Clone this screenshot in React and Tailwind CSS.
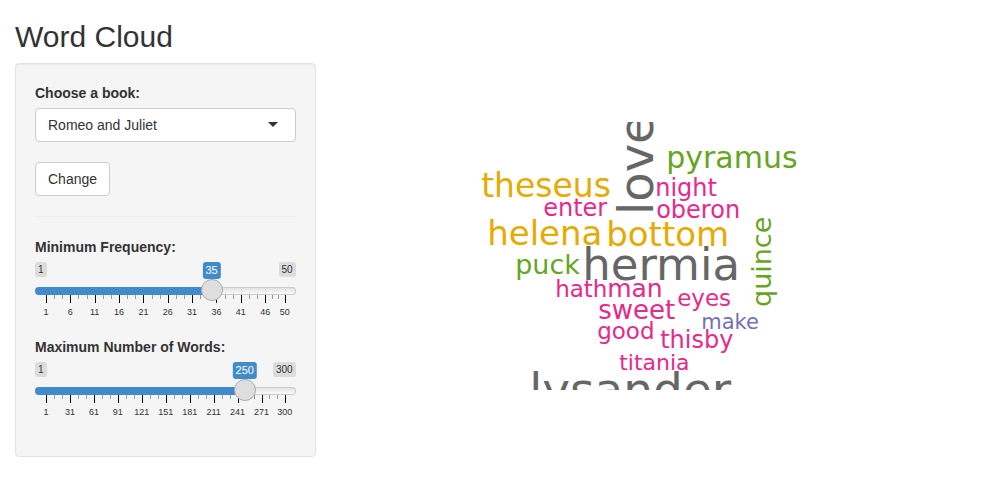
import { useState } from "react";

const BOOKS = ["A Mid Summer Night's Dream", "The Merchant of Venice", "Romeo and Juliet"];

const GRAY = "#666666";
const GOLD = "#e6ab02";
const GREEN = "#66a61e";
const PINK = "#e7298a";
const PURPLE = "#7570b3";

const WORDS = [
  { text: "love", x: 307, y: 93, size: 48, color: GRAY, vertical: true },
  { text: "lysander", x: 183, y: 284, size: 47, color: GRAY },
  { text: "hermia", x: 236, y: 158, size: 45, color: GRAY },
  { text: "bottom", x: 260, y: 124, size: 34, color: GOLD },
  { text: "helena", x: 141, y: 123, size: 34, color: GOLD },
  { text: "theseus", x: 135, y: 75, size: 33, color: GOLD },
  { text: "pyramus", x: 320, y: 46, size: 30, color: GREEN },
  { text: "quince", x: 425, y: 185, size: 27, color: GREEN, vertical: true },
  { text: "puck", x: 169, y: 152, size: 27, color: GREEN },
  { text: "sweet", x: 252, y: 197, size: 26, color: PINK },
  { text: "man", x: 261, y: 175, size: 25, color: PINK },
  { text: "night", x: 309, y: 74, size: 24, color: PINK },
  { text: "oberon", x: 310, y: 96, size: 24, color: PINK },
  { text: "enter", x: 197, y: 94, size: 24, color: PINK },
  { text: "thisby", x: 314, y: 226, size: 24, color: PINK },
  { text: "eyes", x: 331, y: 184, size: 23, color: PINK },
  { text: "good", x: 251, y: 217, size: 23, color: PINK },
  { text: "hath", x: 209, y: 175, size: 23, color: PINK },
  { text: "titania", x: 273, y: 248, size: 22, color: PINK },
  { text: "make", x: 355, y: 207, size: 21, color: PURPLE },
];

function ticksFor(min, max, step) {
  const majors = [];
  for (let v = min; v < max; v += step) majors.push(v);
  majors.push(max);
  const ticks = [];
  majors.forEach((v, i) => {
    ticks.push({ value: v, major: true });
    if (i < majors.length - 1) {
      const gap = (majors[i + 1] - v) / 3;
      ticks.push({ value: v + gap, major: false }, { value: v + 2 * gap, major: false });
    }
  });
  return ticks.map((t) => ({ ...t, left: ((t.value - min) / (max - min)) * 100 }));
}

function RangeSlider({ id, label, min, max, step, initial }) {
  const [value, setValue] = useState(initial);
  const percent = ((value - min) / (max - min)) * 100;
  return (
    <div className="mb-[15px]">
      <label htmlFor={id} className="mb-[5px] block font-bold">
        {label}
      </label>
      <div className="relative h-[60px]">
        <div className="flex h-[25px] items-start justify-between text-[10px] leading-[15px]">
          <span className="rounded-[3px] bg-[#dcdcdc] px-[3px]">{min}</span>
          <span className="rounded-[3px] bg-[#dcdcdc] px-[3px]">{max}</span>
        </div>
        <div className="h-2 overflow-hidden rounded-lg bg-linear-to-b from-[#dedede] to-white shadow-[inset_0_0_0_1px_#ccc]">
          <div className="h-full bg-[#428bca]" style={{ width: `${percent}%` }} />
        </div>
        <div className="relative mx-[11px] h-[27px]">
          {ticksFor(min, max, step).map((t) => (
            <div key={t.left} className="absolute top-0" style={{ left: `${t.left}%` }}>
              <div className={t.major ? "h-2 w-px bg-black" : "h-1 w-px bg-[#999]"} />
              {t.major && (
                <span className="absolute top-3 left-0 -translate-x-1/2 text-[9px] leading-[10px]">
                  {t.value}
                </span>
              )}
            </div>
          ))}
        </div>
        <div className="absolute inset-x-[11px] top-0">
          <output
            htmlFor={id}
            className="absolute top-0 -translate-x-1/2 rounded-[3px] bg-[#428bca] px-[3px] text-[11px] leading-[17px] text-white"
            style={{ left: `${percent}%` }}
          >
            {value}
          </output>
        </div>
        <input
          id={id}
          type="range"
          min={min}
          max={max}
          value={value}
          onChange={(e) => setValue(Number(e.target.value))}
          className="absolute inset-x-0 top-[17px] m-0 h-[22px] w-full cursor-pointer appearance-none bg-transparent [&::-webkit-slider-thumb]:h-[22px] [&::-webkit-slider-thumb]:w-[22px] [&::-webkit-slider-thumb]:appearance-none [&::-webkit-slider-thumb]:rounded-full [&::-webkit-slider-thumb]:border [&::-webkit-slider-thumb]:border-[#ababab] [&::-webkit-slider-thumb]:bg-[#dedede]"
        />
      </div>
    </div>
  );
}

function WordCloud() {
  return (
    <svg
      role="img"
      aria-label="Word cloud"
      viewBox="0 0 631 268"
      className="h-[268px] w-full overflow-hidden"
      fontFamily="'DejaVu Sans', sans-serif"
    >
      {WORDS.map((w) => (
        <text
          key={w.text}
          fontSize={w.size}
          fill={w.color}
          transform={`translate(${w.x} ${w.y})${w.vertical ? " rotate(-90)" : ""}`}
        >
          {w.text}
        </text>
      ))}
    </svg>
  );
}

export default function App() {
  return (
    <main className="px-[15px] pt-5 font-['Liberation_Sans',Arial,sans-serif] text-[14px] leading-5 text-[#333]">
      <h2 className="mb-[10px] text-[30px] leading-[33px]">Word Cloud</h2>
      <div className="-mx-[15px] grid grid-cols-3">
        <div className="px-[15px]">
          <form
            onSubmit={(e) => e.preventDefault()}
            className="rounded-[4px] border border-[#e3e3e3] bg-[#f5f5f5] p-[19px] shadow-[inset_0_1px_1px_rgba(0,0,0,0.05)]"
          >
            <label htmlFor="book" className="mb-[5px] block font-bold">
              Choose a book:
            </label>
            <div className="relative mb-5">
              <select
                id="book"
                defaultValue="Romeo and Juliet"
                className="block h-[34px] w-full appearance-none rounded-[4px] border border-[#ccc] bg-white px-3"
              >
                {BOOKS.map((b) => (
                  <option key={b}>{b}</option>
                ))}
              </select>
              <span className="pointer-events-none absolute top-[14px] right-[18px] border-x-5 border-t-5 border-x-transparent border-t-[#333]" />
            </div>
            <button
              type="submit"
              className="block h-[34px] rounded-[4px] border border-[#ccc] bg-white px-3"
            >
              Change
            </button>
            <hr className="my-5 border-[#eee]" />
            <RangeSlider id="freq" label="Minimum Frequency:" min={1} max={50} step={5} initial={35} />
            <RangeSlider id="max" label="Maximum Number of Words:" min={1} max={300} step={30} initial={250} />
          </form>
        </div>
        <div className="col-span-2 px-[15px] pt-[59px]">
          <WordCloud />
        </div>
      </div>
    </main>
  );
}
